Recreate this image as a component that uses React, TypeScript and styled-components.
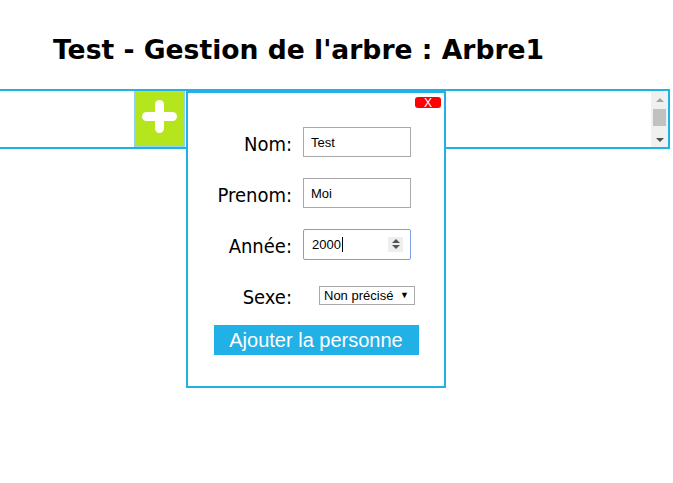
import styled, { createGlobalStyle } from 'styled-components';

const BLUE = '#22b1e6';

const GlobalStyle = createGlobalStyle`
  html, body {
    margin: 0;
    background: #fff;
    font-family: 'DejaVu Sans Condensed', 'DejaVu Sans', sans-serif;
  }
`;

const Page = styled.div`
  min-height: 483px;
  position: relative;
`;

const Title = styled.h1`
  margin: 0 0 23px;
  padding: 33px 0 0 53px;
  font-family: 'DejaVu Sans', sans-serif;
  font-weight: bold;
  font-size: 26.6px;
  line-height: 33px;
  color: #000;
`;

const TreeBar = styled.div`
  position: relative;
  display: flex;
  width: 668px;
  height: 56px;
  border: 2px solid ${BLUE};
  border-left: none;
`;

const Spacer = styled.div`
  width: 134px;
`;

const AddButton = styled.button`
  all: unset;
  box-sizing: border-box;
  width: 51px;
  height: 56px;
  background: #b5e61d;
  border: 1px solid #8dd4ef;
  cursor: pointer;
  display: block;
  svg {
    display: block;
  }
`;

const Canvas = styled.div`
  flex: 1;
`;

const ScrollBar = styled.div`
  width: 17px;
  background: #f0f0f0;
  display: flex;
  flex-direction: column;
  align-items: center;
`;

const ScrollArrow = styled.div<{ $dark?: boolean }>`
  width: 0;
  height: 0;
  border-left: 4px solid transparent;
  border-right: 4px solid transparent;
  ${p =>
    p.$dark
      ? `border-top: 4px solid #505050; margin-top: 12px;`
      : `border-bottom: 4px solid #a3a3a3; margin-top: 7px;`}
`;

const ScrollThumb = styled.div`
  width: 13px;
  height: 17px;
  margin-top: 7px;
  background: #c1c1c1;
`;

const Popup = styled.div`
  position: absolute;
  left: 186px;
  top: 0;
  z-index: 2;
  box-sizing: border-box;
  width: 260px;
  height: 297px;
  background: #fff;
  border: 2px solid ${BLUE};
  padding-top: 34px;
`;

const CloseButton = styled.button`
  all: unset;
  position: absolute;
  top: 4px;
  right: 3px;
  width: 26px;
  height: 11px;
  border-radius: 3px;
  background: #ff0000;
  color: #fff;
  font-family: 'Liberation Sans', Arial, sans-serif;
  font-size: 12px;
  line-height: 10px;
  text-align: center;
  cursor: pointer;
`;

const Form = styled.div`
  display: grid;
  grid-template-columns: 104px 108px;
  grid-auto-rows: 30px;
  column-gap: 11px;
  row-gap: 21px;
  align-items: center;
`;

const Label = styled.label`
  text-align: right;
  font-size: 20px;
  line-height: 24px;
  padding-top: 4px;
  color: #000;
`;

const TextInput = styled.input`
  box-sizing: border-box;
  width: 108px;
  height: 30px;
  margin: 0;
  padding: 0 7px;
  border: 1px solid #a9a9a9;
  font-family: 'Liberation Sans', Arial, sans-serif;
  font-size: 13px;
  color: #000;
  outline: none;
`;

const NumberField = styled.div`
  box-sizing: border-box;
  width: 108px;
  height: 31px;
  display: flex;
  align-items: center;
  padding: 0 7px 0 8px;
  border: 1px solid #7b9ee3;
  border-radius: 2px;
  font-family: 'Liberation Sans', Arial, sans-serif;
  font-size: 13px;
  color: #000;
`;

const Caret = styled.span`
  display: inline-block;
  width: 1px;
  height: 15px;
  margin-left: 1px;
  background: #000;
`;

const Spinner = styled.div`
  margin-left: auto;
  width: 15px;
  height: 15px;
  background: #eeeeee;
  display: flex;
  flex-direction: column;
  align-items: center;
  justify-content: center;
  gap: 2px;
`;

const SpinArrow = styled.div<{ $down?: boolean }>`
  width: 0;
  height: 0;
  border-left: 4px solid transparent;
  border-right: 4px solid transparent;
  ${p =>
    p.$down
      ? `border-top: 4px solid #555;`
      : `border-bottom: 4px solid #555;`}
`;

const Select = styled.div`
  box-sizing: border-box;
  width: 96px;
  height: 19px;
  margin-left: 16px;
  display: flex;
  align-items: center;
  justify-content: space-between;
  padding: 0 5px 0 4px;
  border: 1px solid #a9a9a9;
  font-family: 'Liberation Sans', Arial, sans-serif;
  font-size: 13px;
  color: #000;
  white-space: nowrap;
`;

const SelectArrow = styled.span`
  font-size: 9px;
`;

const SubmitButton = styled.button`
  all: unset;
  display: block;
  box-sizing: border-box;
  width: 205px;
  height: 30px;
  margin: 15px auto 0;
  background: ${BLUE};
  color: #fff;
  font-family: 'Liberation Sans', Arial, sans-serif;
  font-size: 20px;
  line-height: 30px;
  text-align: center;
  cursor: pointer;
`;

const PlusIcon = () => (
  <svg width="49" height="54" viewBox="0 0 49 54">
    <g stroke="#fff" strokeWidth="9" strokeLinecap="round">
      <line x1="11.5" y1="24.5" x2="37.5" y2="24.5" />
      <line x1="24.5" y1="12.5" x2="24.5" y2="36.5" />
    </g>
  </svg>
);

export default function App() {
  return (
    <Page>
      <GlobalStyle />
      <Title>Test - Gestion de l'arbre : Arbre1</Title>
      <TreeBar>
        <Spacer />
        <AddButton aria-label="Ajouter">
          <PlusIcon />
        </AddButton>
        <Canvas />
        <ScrollBar>
          <ScrollArrow />
          <ScrollThumb />
          <ScrollArrow $dark />
        </ScrollBar>
        <Popup>
          <CloseButton>X</CloseButton>
          <Form>
            <Label>Nom:</Label>
            <TextInput defaultValue="Test" />
            <Label>Prenom:</Label>
            <TextInput defaultValue="Moi" />
            <Label>Année:</Label>
            <NumberField>
              2000
              <Caret />
              <Spinner>
                <SpinArrow />
                <SpinArrow $down />
              </Spinner>
            </NumberField>
            <Label>Sexe:</Label>
            <Select>
              Non précisé <SelectArrow>▼</SelectArrow>
            </Select>
          </Form>
          <SubmitButton>Ajouter la personne</SubmitButton>
        </Popup>
      </TreeBar>
    </Page>
  );
}
